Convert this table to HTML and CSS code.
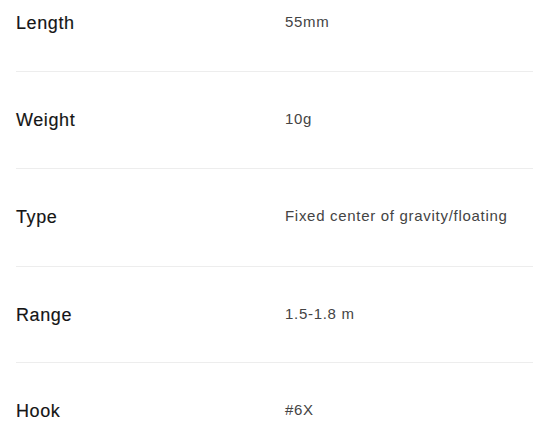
FILE: index.html
```html
<!DOCTYPE html>
<html lang="en">
<head>
<meta charset="utf-8">
<title>Specs</title>
<link rel="stylesheet" href="styles.css">
</head>
<body>
<dl class="specs">
  <div class="spec"><dt class="label">Length</dt><dd class="value">55mm</dd></div>
  <div class="spec"><dt class="label">Weight</dt><dd class="value">10g</dd></div>
  <div class="spec"><dt class="label">Type</dt><dd class="value">Fixed center of gravity/floating</dd></div>
  <div class="spec"><dt class="label">Range</dt><dd class="value">1.5-1.8 m</dd></div>
  <div class="spec"><dt class="label">Hook</dt><dd class="value">#6X</dd></div>
</dl>
</body>
</html>
```
FILE: styles.css
```css
html, body {
  margin: 0;
  padding: 0;
  background: #ffffff;
}
body {
  font-family: "Liberation Sans", Arial, sans-serif;
  overflow: hidden;
}
.specs {
  margin: 0;
  padding: 0 0 0 16px;
}
.spec {
  display: grid;
  grid-template-columns: 269px 1fr;
  align-items: start;
  padding: 36px 0;
  line-height: 24px;
  border-top: 1px solid #ededed;
}
.spec:first-child {
  border-top: none;
  padding-top: 11px;
}
.spec:nth-child(3) {
  padding-bottom: 37px;
}
.spec:nth-child(4) {
  padding-bottom: 35px;
}
.label {
  margin: 0;
  font-size: 18px;
  letter-spacing: 0.6px;
  color: #151515;
  -webkit-text-stroke: 0.15px #151515;
}
.value {
  margin: 0;
  font-size: 15px;
  letter-spacing: 0.7px;
  line-height: 22px;
  color: #444444;
}
```
